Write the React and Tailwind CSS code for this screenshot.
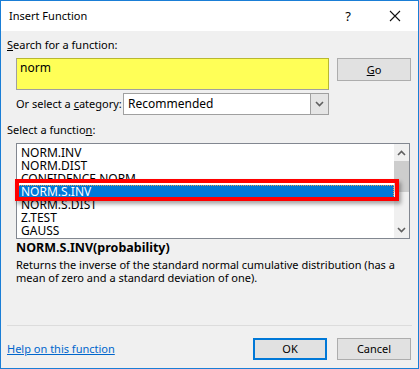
import React from "react";

const items = ["NORM.INV", "NORM.DIST", "CONFIDENCE.NORM", "NORM.S.INV", "NORM.S.DIST", "Z.TEST", "GAUSS"];

const Chevron = ({ up = false, className = "" }) => (
  <svg width="9" height="6" viewBox="0 0 9 6" className={className}>
    <path d={up ? "M1 5 L4.5 1.5 L8 5" : "M1 1 L4.5 4.5 L8 1"} fill="none" stroke="#606060" strokeWidth="1.6" />
  </svg>
);

export default function App() {
  return (
    <div
      className="w-[419px] h-[369px] border border-[#1a7ed6] bg-[#f0f0f0] flex flex-col text-[11px] text-black"
      style={{ fontFamily: '"Noto Sans", "Open Sans", sans-serif' }}
    >
      <div className="h-[30px] bg-white flex items-center pl-[8px] shrink-0">
        <span className="leading-[16px]">Insert Function</span>
        <span className="ml-auto mr-[38px] text-[13px] leading-[16px]">?</span>
        <svg width="12" height="12" viewBox="0 0 12 12" className="mr-[17px]">
          <path d="M1 1 L11 11 M11 1 L1 11" stroke="#111" strokeWidth="1.1" />
        </svg>
      </div>

      <div className="flex flex-col flex-1">
        <div className="ml-[6px] mt-[6px] leading-[16px]">
          <span className="underline">S</span>earch for a function:
        </div>

        <div className="ml-[15px] mt-[5px] flex gap-[8px]">
          <div className="w-[313px] h-[32px] bg-[#ffff57] border border-[#a0a0a0] border-t-[#b8b830] border-r-[#b8b830] px-[3px] pt-[1px] text-[12px] leading-[16px]">
            norm
          </div>
          <button className="w-[74px] h-[23px] bg-[#e1e1e1] border border-[#adadad] leading-[16px]">
            <span className="underline">G</span>o
          </button>
        </div>

        <div className="ml-[15px] mt-[3px] flex items-center">
          <span className="w-[107px] leading-[16px] whitespace-nowrap">
            Or select a <span className="underline">c</span>ategory:
          </span>
          <div className="w-[206px] h-[22px] bg-white border border-[#a0a0a0] flex items-center">
            <span className="pl-[4px] flex-1 text-[12px] leading-[16px]">Recommended</span>
            <div className="w-[18px] h-full bg-[#e5e5e5] border-l border-[#a0a0a0] flex items-center justify-center">
              <Chevron />
            </div>
          </div>
        </div>

        <div className="ml-[6px] mt-[7px] leading-[16px]">
          Select a functio<span className="underline">n</span>:
        </div>

        <div className="ml-[15px] mt-[5px] w-[394px] h-[96px] border border-[#828790] bg-white flex relative">
          <div className="flex-1 pt-[2px] overflow-hidden text-[12px]">
            {items.map((it, i) => (
              <div
                key={it}
                className={
                  "h-[13px] leading-[13px] pl-[4px] " +
                  (i === 3 ? "bg-[#0078d7] text-white outline outline-1 outline-dotted outline-[#f0a050] -outline-offset-1" : "")
                }
              >
                {it}
              </div>
            ))}
          </div>
          <div className="w-[15px] h-full bg-[#f0f0f0] flex flex-col items-center">
            <div className="h-[17px] flex items-center justify-center">
              <Chevron up />
            </div>
            <div className="w-[15px] h-[31px] bg-[#cdcdcd]" />
            <div className="flex-1" />
            <div className="h-[17px] flex items-center justify-center">
              <Chevron />
            </div>
          </div>
          <div className="absolute left-[-2px] top-[35px] w-[384px] h-[22px] border-[4px] border-[#ff0000] shadow-[2px_3px_4px_rgba(0,0,0,0.35)] pointer-events-none" />
        </div>

        <div className="ml-[15px] mt-[1px] font-bold text-[12.5px] leading-[16px]">NORM.S.INV(probability)</div>
        <div className="ml-[15px] mt-[2px] w-[390px] leading-[13px]">
          Returns the inverse of the standard normal cumulative distribution (has a mean of zero and a standard deviation of one).
        </div>

        <div className="flex-1" />
        <div className="mx-[6px] h-px bg-[#dcdcdc]" />

        <div className="flex items-center ml-[6px] mr-[7px] mt-[12px] mb-[8px]">
          <span className="text-[#0066cc] underline leading-[16px]">Help on this function</span>
          <button className="ml-auto w-[74px] h-[22px] bg-[#e1e1e1] border-2 border-[#0078d7] leading-[16px]">OK</button>
          <button className="ml-[10px] w-[74px] h-[22px] bg-[#e1e1e1] border border-[#adadad] leading-[16px]">Cancel</button>
        </div>
      </div>
    </div>
  );
}
